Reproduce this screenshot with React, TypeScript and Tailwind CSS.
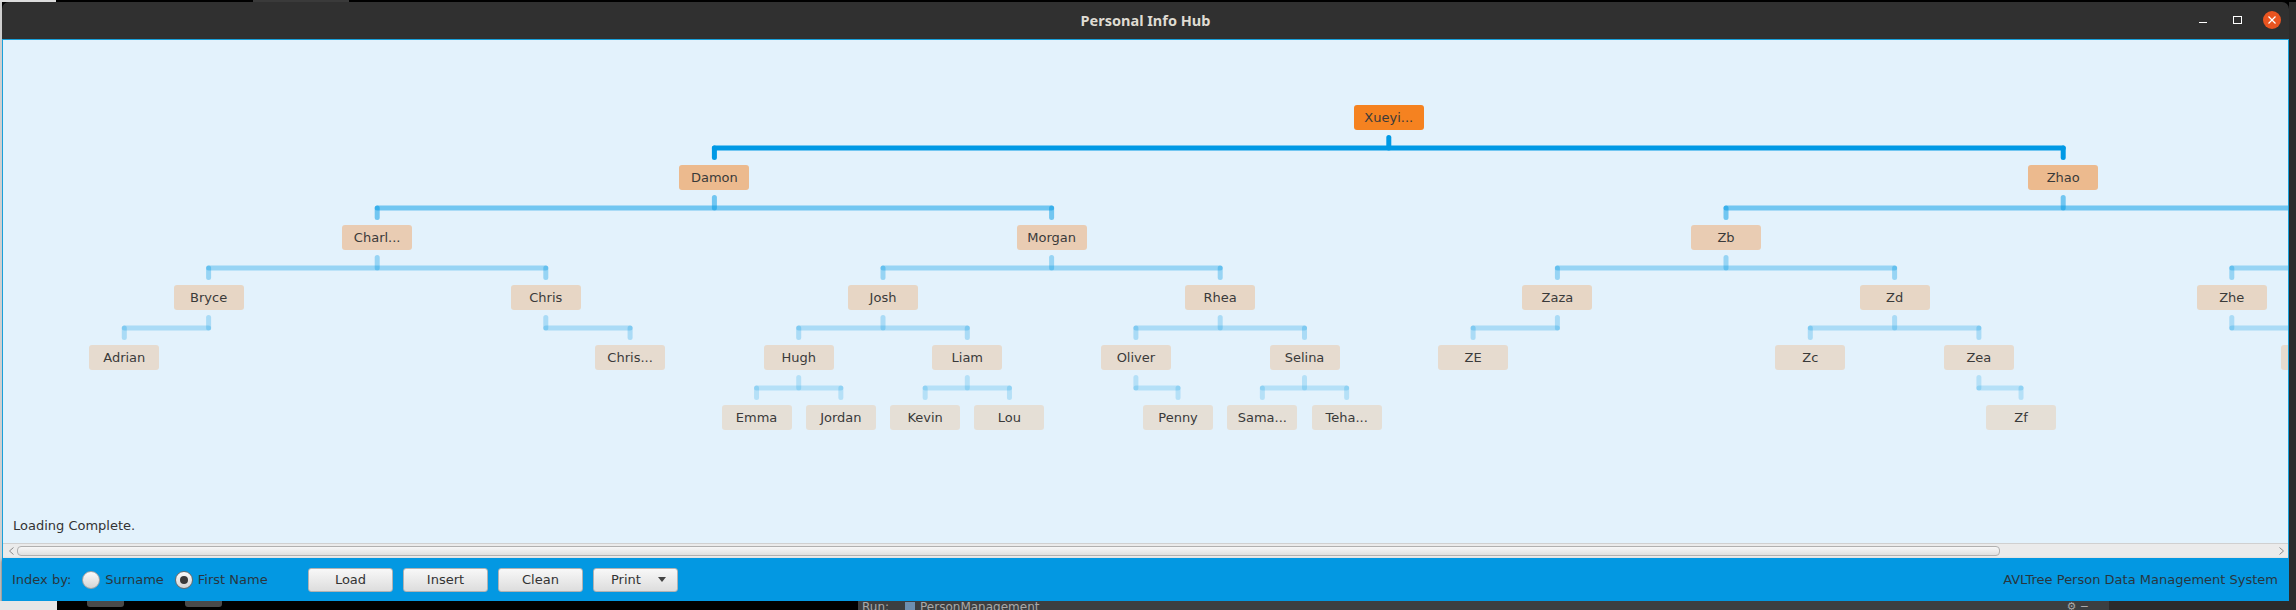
import React from "react";

type TreeNode = { label: string; kids?: (TreeNode | null)[] };
type Box = { label: string; d: number; i: number };
type Link = { d: number; px: number; xs: number[] };

// deepest row has 32 slots, every row above doubles the slot width
const SLOT = 84.3;
const X0 = 37;
const TOP0 = 65;
const ROW = 60;
const CANVAS_W = 2285;
const CANVAS_H = 472;

const cx = (d: number, i: number) => X0 + (i + 0.5) * SLOT * 2 ** (5 - d);

const tree: TreeNode = {
  label: "Xueyi...",
  kids: [
    {
      label: "Damon",
      kids: [
        {
          label: "Charl...",
          kids: [
            { label: "Bryce", kids: [{ label: "Adrian" }] },
            { label: "Chris", kids: [null, { label: "Chris..." }] },
          ],
        },
        {
          label: "Morgan",
          kids: [
            {
              label: "Josh",
              kids: [
                { label: "Hugh", kids: [{ label: "Emma" }, { label: "Jordan" }] },
                { label: "Liam", kids: [{ label: "Kevin" }, { label: "Lou" }] },
              ],
            },
            {
              label: "Rhea",
              kids: [
                { label: "Oliver", kids: [null, { label: "Penny" }] },
                { label: "Selina", kids: [{ label: "Sama..." }, { label: "Teha..." }] },
              ],
            },
          ],
        },
      ],
    },
    {
      label: "Zhao",
      kids: [
        {
          label: "Zb",
          kids: [
            { label: "Zaza", kids: [{ label: "ZE" }] },
            {
              label: "Zd",
              kids: [{ label: "Zc" }, { label: "Zea", kids: [null, { label: "Zf" }] }],
            },
          ],
        },
        // this branch runs past the right edge of the view, labels not visible
        { label: "", kids: [{ label: "Zhe", kids: [null, { label: "" }] }] },
      ],
    },
  ],
};

const boxes: Box[] = [];
const links: Link[] = [];
function walk(n: TreeNode, d: number, i: number) {
  boxes.push({ label: n.label, d, i });
  const xs: number[] = [];
  n.kids?.forEach((k, side) => {
    if (!k) return;
    const ci = i * 2 + side;
    xs.push(cx(d + 1, ci));
    walk(k, d + 1, ci);
  });
  if (xs.length) links.push({ d, px: cx(d, i), xs });
}
walk(tree, 0, 0);

const NODE_BG = [
  "bg-[rgb(245,130,32)]",
  "bg-[rgba(245,130,32,0.5)]",
  "bg-[rgba(245,130,32,0.333)]",
  "bg-[rgba(245,130,32,0.25)]",
  "bg-[rgba(245,130,32,0.2)]",
  "bg-[rgba(245,130,32,0.167)]",
];

const TreeCanvas: React.FC = () => (
  <div className="relative h-[472px] overflow-hidden">
    <svg className="absolute inset-0" width={CANVAS_W} height={CANVAS_H}>
      {links.map((l, k) => {
        const t = TOP0 + ROW * l.d;
        const y = t + 43;
        const lo = Math.min(l.px, ...l.xs);
        const hi = Math.max(l.px, ...l.xs);
        return (
          <g key={k} stroke="#0099e5" strokeOpacity={1 / (l.d + 1)} strokeWidth={5} strokeLinecap="round">
            <line x1={l.px} y1={t + 32.5} x2={l.px} y2={y} />
            <line x1={lo} y1={y} x2={hi} y2={y} />
            {l.xs.map((x) => (
              <line key={x} x1={x} y1={y} x2={x} y2={t + 52.5} />
            ))}
          </g>
        );
      })}
    </svg>
    {boxes.map((b) => (
      <div
        key={`${b.d}-${b.i}`}
        className={`absolute w-[70px] h-[25px] rounded-[3px] flex items-center justify-center text-[13px] text-[#3a3a3a] ${NODE_BG[b.d]}`}
        style={{ left: cx(b.d, b.i) - 35, top: TOP0 + ROW * b.d }}
      >
        {b.label}
      </div>
    ))}
  </div>
);

const Radio: React.FC<{ checked?: boolean }> = ({ checked }) => (
  <span
    className={`w-[18px] h-[18px] rounded-full border flex items-center justify-center bg-linear-to-b from-[#fbfbfb] to-[#d4d4d4] ${
      checked ? "border-[#6a6a6a]" : "border-[#a2a2a2]"
    }`}
  >
    {checked && <span className="w-[8px] h-[8px] rounded-full bg-[#3a3a3a]" />}
  </span>
);

const Btn: React.FC<{ children: React.ReactNode }> = ({ children }) => (
  <button className="w-[85px] h-[24px] rounded-[3px] border border-[#b2b2b2] bg-linear-to-b from-[#f8f8f8] to-[#dddddd] text-[13px] text-[#333] flex items-center justify-center">
    {children}
  </button>
);

const Window: React.FC = () => (
  <div className="w-[2287px] flex flex-col">
    {/* title bar */}
    <div className="h-[37px] bg-[#303030] rounded-t-[7px] grid grid-cols-[1fr_auto_1fr] items-center">
      <div />
      <div className="font-['Noto_Sans',sans-serif] font-bold text-[14.5px] text-[#dfdbd2]">Personal Info Hub</div>
      <div className="flex justify-end items-center pr-[8px] pb-[2px]">
        <span className="w-[8px] h-[1px] bg-white mt-[5px]" />
        <span className="ml-[26px] w-[9px] h-[8px] border border-white" />
        <span className="ml-[21px] w-[18px] h-[18px] rounded-full bg-[#e95420] flex items-center justify-center">
          <svg width="8" height="8" viewBox="0 0 8 8" stroke="white" strokeWidth="1.2">
            <line x1="0.5" y1="0.5" x2="7.5" y2="7.5" />
            <line x1="7.5" y1="0.5" x2="0.5" y2="7.5" />
          </svg>
        </span>
      </div>
    </div>

    {/* content */}
    <div className="h-[519px] border-t border-x border-[#19a0da] bg-[#e3f2fc] flex flex-col">
      <TreeCanvas />
      <div className="h-[31px] pl-[10px] pt-[6px] text-[13px] leading-[15px] text-[#333]">Loading Complete.</div>
      <div className="h-[15px] bg-[#ebebeb] border-t border-[#d0d0d0] flex items-center">
        <svg className="ml-[6px]" width="5" height="8" viewBox="0 0 5 8" fill="none" stroke="#8a8a8a">
          <polyline points="4.5,0.5 0.5,4 4.5,7.5" />
        </svg>
        <div className="ml-[3px] w-[1983px] h-[10px] rounded-[4px] border border-[#b0b0b0] bg-linear-to-b from-[#f7f7f7] to-[#e0e0e0]" />
        <div className="flex-1" />
        <svg className="mr-[4px]" width="5" height="8" viewBox="0 0 5 8" fill="none" stroke="#8a8a8a">
          <polyline points="0.5,0.5 4.5,4 0.5,7.5" />
        </svg>
      </div>
    </div>

    {/* bottom tool bar */}
    <div className="h-[43px] bg-[#0398e2] flex items-center text-[13px] text-[#28363f] shadow-[0_2px_3px_rgba(0,0,0,0.6)]">
      <div className="w-[306px] pl-[10px] flex items-center">
        <span>Index by:</span>
        <span className="ml-[11px]"><Radio /></span>
        <span className="ml-[5px]">Surname</span>
        <span className="ml-[11px]"><Radio checked /></span>
        <span className="ml-[5px]">First Name</span>
      </div>
      <div className="flex gap-[10px]">
        <Btn>Load</Btn>
        <Btn>Insert</Btn>
        <Btn>Clean</Btn>
        <button className="w-[85px] h-[24px] rounded-[3px] border border-[#b2b2b2] bg-linear-to-b from-[#f8f8f8] to-[#dddddd] text-[13px] text-[#333] flex items-center pl-[17px]">
          <span>Print</span>
          <svg className="ml-auto mr-[11px]" width="8" height="5" viewBox="0 0 8 5">
            <polygon points="0,0 8,0 4,5" fill="#444" />
          </svg>
        </button>
      </div>
      <div className="flex-1 text-right pr-[11px]">AVLTree Person Data Management System</div>
    </div>
  </div>
);

export default function App() {
  return (
    <div className="w-[2296px] h-[610px] bg-black flex flex-col overflow-hidden font-['DejaVu_Sans',sans-serif]">
      {/* desktop behind the window, top edge */}
      <div className="h-[2px] flex shrink-0">
        <div className="w-[56px] bg-[#dcdcdc]" />
        <div className="w-[197px]" />
        <div className="w-[96px] bg-[#3a3a3a]" />
        <div className="flex-1" />
      </div>

      <div className="h-[599px] flex shrink-0">
        <div className="w-[2px] bg-[#cfcfcf]" />
        <Window />
        <div className="flex-1 bg-[#2b2b2b]" />
      </div>

      {/* desktop behind the window, bottom edge */}
      <div className="h-[9px] flex shrink-0 overflow-hidden">
        <div className="w-[57px] bg-[#e6e6e6]" />
        <div className="w-[801px] flex">
          <span className="ml-[30px] w-[37px] h-[6px] rounded-b-[3px] bg-[#4a4a4a]" />
          <span className="ml-[61px] w-[37px] h-[6px] rounded-b-[3px] bg-[#4a4a4a]" />
        </div>
        <div className="w-[1251px] bg-[#3c3f41] flex items-start text-[12px] leading-[12px] text-[#a9a9a9]">
          <span className="ml-[4px]">Run:</span>
          <span className="ml-[16px] mt-[1px] w-[10px] h-[8px] bg-[#6d8fb0]" />
          <span className="ml-[5px]">PersonManagement</span>
          <span className="ml-auto mr-[20px] text-[11px]">⚙ −</span>
        </div>
        <div className="flex-1 bg-[#2b2b2b]" />
      </div>
    </div>
  );
}
